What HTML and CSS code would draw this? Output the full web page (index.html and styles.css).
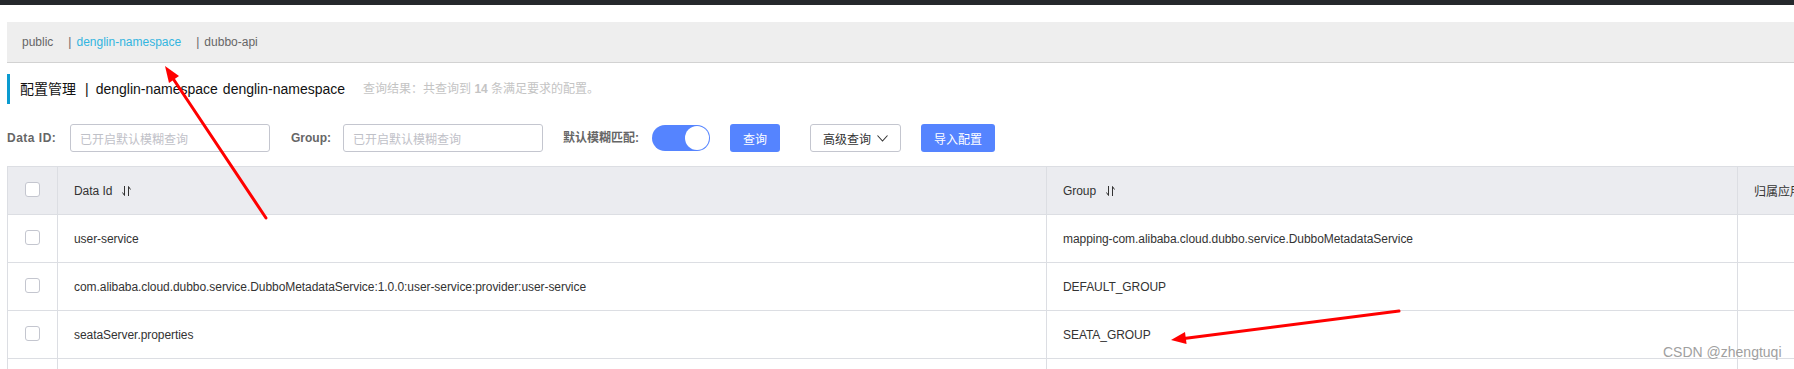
FILE: index.html
```html
<!DOCTYPE html>
<html lang="zh-CN">
<head>
<meta charset="utf-8">
<title>配置管理</title>
<link rel="stylesheet" href="styles.css">
</head>
<body>
<div class="topbar"></div>
<div class="page">
  <div class="ns-bar">
    <span class="ns-item">public</span>
    <span class="ns-item"><span class="ns-sep">|</span><span class="ns-active">denglin-namespace</span></span>
    <span class="ns-item"><span class="ns-sep">|</span>dubbo-api</span>
  </div>

  <div class="title-row">
    <span class="title">配置管理</span><span class="title-sep">|</span><span class="title-ns">denglin-namespace</span><span class="title-ns2">denglin-namespace</span>
    <span class="result">查询结果：共查询到 <b>14</b> 条满足要求的配置。</span>
  </div>

  <div class="search-row">
    <span class="label label-id">Data ID:</span>
    <div class="input"><span class="ph">已开启默认模糊查询</span></div>
    <span class="label label-group">Group:</span>
    <div class="input"><span class="ph">已开启默认模糊查询</span></div>
    <span class="label label-fuzzy">默认模糊匹配:</span>
    <div class="switch"><div class="knob"></div></div>
    <div class="btn primary btn-query">查询</div>
    <div class="btn normal btn-adv">高级查询<svg class="chev" width="11" height="7" viewBox="0 0 11 7"><polyline points="0.5,0.5 5.5,6 10.5,0.5" fill="none" stroke="#333" stroke-width="1.1"/></svg></div>
    <div class="btn primary btn-import">导入配置</div>
  </div>

  <div class="table">
    <div class="row head">
      <div class="cell cb-cell"><span class="cb"></span></div>
      <div class="cell">Data Id<svg class="sort" width="10" height="12" viewBox="0 0 10 12"><path d="M2.5 1 V10.5 M2.5 10.5 L0.5 7.5" fill="none" stroke="#333" stroke-width="1"/><path d="M6.5 11 V1.5 M6.5 1.5 L8.5 4.5" fill="none" stroke="#333" stroke-width="1"/></svg></div>
      <div class="cell">Group<svg class="sort" width="10" height="12" viewBox="0 0 10 12"><path d="M2.5 1 V10.5 M2.5 10.5 L0.5 7.5" fill="none" stroke="#333" stroke-width="1"/><path d="M6.5 11 V1.5 M6.5 1.5 L8.5 4.5" fill="none" stroke="#333" stroke-width="1"/></svg></div>
      <div class="cell">归属应用</div>
    </div>
    <div class="row">
      <div class="cell cb-cell"><span class="cb"></span></div>
      <div class="cell">user-service</div>
      <div class="cell">mapping-com.alibaba.cloud.dubbo.service.DubboMetadataService</div>
      <div class="cell"></div>
    </div>
    <div class="row">
      <div class="cell cb-cell"><span class="cb"></span></div>
      <div class="cell">com.alibaba.cloud.dubbo.service.DubboMetadataService:1.0.0:user-service:provider:user-service</div>
      <div class="cell">DEFAULT_GROUP</div>
      <div class="cell"></div>
    </div>
    <div class="row">
      <div class="cell cb-cell"><span class="cb"></span></div>
      <div class="cell">seataServer.properties</div>
      <div class="cell">SEATA_GROUP</div>
      <div class="cell"></div>
    </div>
    <div class="row">
      <div class="cell cb-cell"><span class="cb"></span></div>
      <div class="cell"></div>
      <div class="cell"></div>
      <div class="cell"></div>
    </div>
  </div>
</div>

<svg class="annotations" width="1794" height="369" viewBox="0 0 1794 369">
  <line x1="266" y1="218" x2="172" y2="77" stroke="#ff0000" stroke-width="3" stroke-linecap="round"/>
  <polygon points="165,66 179,76 169,83" fill="#ff0000"/>
  <line x1="1399" y1="311" x2="1184" y2="338.5" stroke="#ff0000" stroke-width="3" stroke-linecap="round"/>
  <polygon points="1171,340 1185,332 1186.6,344" fill="#ff0000"/>
</svg>
<div class="watermark">CSDN @zhengtuqi</div>
</body>
</html>
```

FILE: styles.css
```css
* { box-sizing: border-box; }

html, body {
  margin: 0;
  padding: 0;
  background: #fff;
  width: 1794px;
  height: 369px;
  overflow: hidden;
  position: relative;
  font-family: "Liberation Sans", Arial, "Noto Sans CJK SC", sans-serif;
  font-size: 12px;
  color: #333;
}

.topbar {
  height: 5px;
  background: #25282c;
}

.page {
  padding-left: 7px;
}

/* namespace bar */
.ns-bar {
  margin-top: 17px;
  height: 41px;
  background: #eeeeee;
  border-bottom: 1px solid #d2d2d2;
  display: flex;
  align-items: center;
  padding-left: 15px;
  gap: 15px;
  color: #666;
  font-size: 12px;
  line-height: 16px;
}
.ns-sep {
  color: #666;
  margin-right: 5px;
}
.ns-active {
  color: #33b5e0;
}

/* title */
.title-row {
  margin-top: 11px;
  height: 30px;
  border-left: 3px solid #0b9bd0;
  padding-left: 10px;
  display: flex;
  align-items: center;
  font-size: 14px;
  line-height: 18px;
  color: #111;
}
.title-sep {
  margin: 0 7px 0 9px;
}
.title-ns2 {
  margin-left: 5px;
}
.result {
  margin-left: 18px;
  font-size: 12px;
  color: #c4c4c4;
}
.result b {
  font-weight: bold;
}

/* search row */
.search-row {
  margin-top: 20px;
  height: 28px;
  display: flex;
  align-items: center;
}
.label {
  font-weight: bold;
  color: #666;
  font-size: 12px;
  line-height: 16px;
}
.label-id { width: 63px; letter-spacing: 0.5px; }
.label-group { margin-left: 21px; width: 52px; }
.label-fuzzy { margin-left: 20px; width: 89px; }
.input {
  width: 200px;
  height: 28px;
  border: 1px solid #c4c6cf;
  border-radius: 3px;
  display: flex;
  align-items: center;
  padding-left: 9px;
}
.ph {
  color: #bfc1c8;
  font-size: 12px;
}
.switch {
  width: 58px;
  height: 26px;
  border-radius: 13px;
  background: #5584ff;
  display: flex;
  align-items: center;
  justify-content: flex-end;
  padding-right: 1px;
}
.knob {
  width: 24px;
  height: 24px;
  border-radius: 50%;
  background: #fff;
}
.btn {
  height: 28px;
  border-radius: 3px;
  display: flex;
  align-items: center;
  justify-content: center;
  font-size: 12px;
}
.primary {
  background: #5584ff;
  color: #fff;
}
.normal {
  background: #fff;
  border: 1px solid #c4c6cf;
  color: #333;
}
.btn-query { margin-left: 20px; width: 50px; }
.btn-adv { margin-left: 30px; width: 91px; gap: 6px; }
.btn-import { margin-left: 20px; width: 74px; }
.chev { display: block; }

/* table */
.table {
  margin-top: 14px;
  border-top: 1px solid #dcdee3;
  border-left: 1px solid #dcdee3;
  width: 2100px;
}
.row {
  display: grid;
  grid-template-columns: 50px 989px 691px 300px;
  height: 48px;
}
.row.head {
  background: #ebecf0;
}
.cell {
  border-right: 1px solid #dcdee3;
  border-bottom: 1px solid #dcdee3;
  display: flex;
  align-items: center;
  padding-left: 16px;
  white-space: nowrap;
  font-size: 12px;
  letter-spacing: -0.06px;
  color: #333;
}
.cb-cell {
  padding-left: 0;
  justify-content: center;
}
.cb {
  width: 15px;
  height: 15px;
  border: 1px solid #c4c6cf;
  border-radius: 3px;
  background: #fff;
  margin-top: -2px;
}
.sort {
  margin-left: 10px;
  display: block;
}

/* overlays */
.annotations {
  position: absolute;
  left: 0;
  top: 0;
  pointer-events: none;
}
.watermark {
  position: absolute;
  left: 1663px;
  top: 343px;
  font-size: 14px;
  line-height: 18px;
  color: #a0a0a0;
  font-family: "Liberation Sans", Arial, sans-serif;
  white-space: nowrap;
}
```
